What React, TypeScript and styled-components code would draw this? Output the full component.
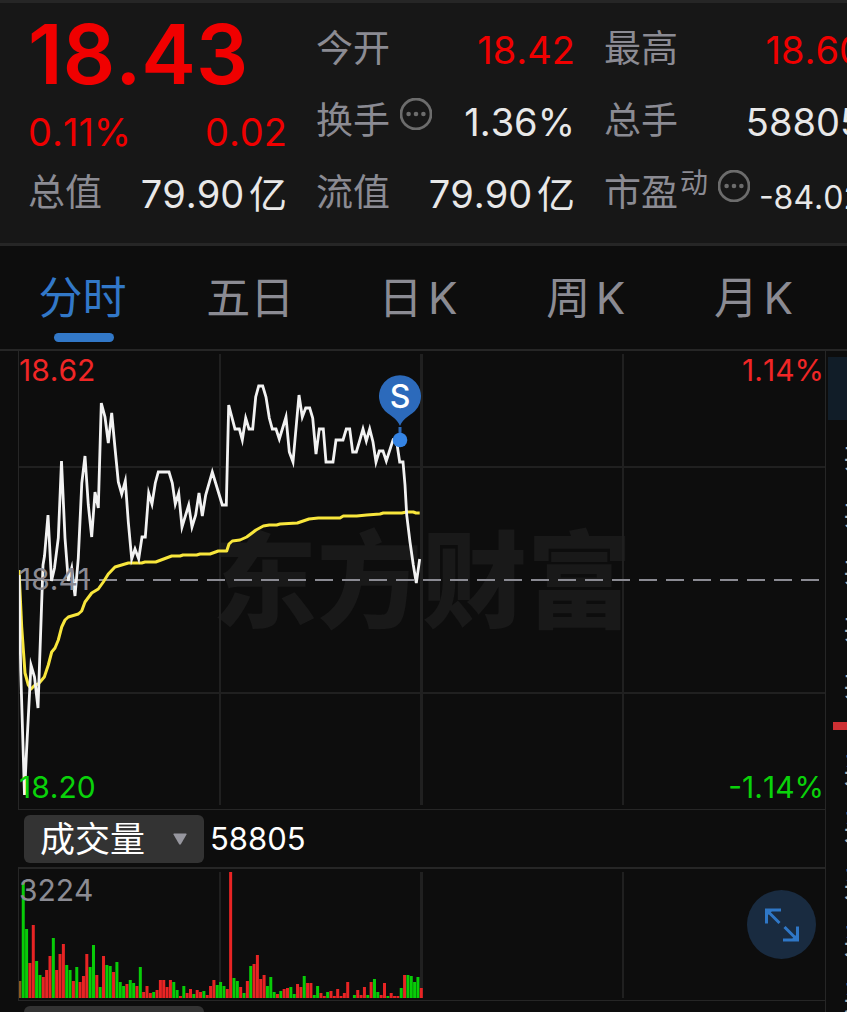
import React, { useState } from 'react';
import styled, { createGlobalStyle } from 'styled-components';

const color = {
  page: '#0d0d0d',
  panel: '#171717',
  line: '#262626',
  grid: '#202020',
  label: '#8b8b93',
  value: '#e8e8e8',
  up: '#f00000',
  chartUp: '#f02626',
  chartDown: '#0ad20a',
  accent: '#3278c8',
};

const GlobalStyle = createGlobalStyle`
  *, *::before, *::after { box-sizing: border-box; }
  body {
    margin: 0;
    background: ${color.page};
    font-family: Inter, 'Noto Sans CJK SC', sans-serif;
    font-weight: 380;
    font-kerning: none;
    text-autospace: normal;
  }
  button, select { font: inherit; font-kerning: inherit; text-autospace: inherit; margin: 0; }
  dl, dd, dt { margin: 0; }
`;

const Page = styled.main`
  height: 100vh;
  overflow: hidden;
  display: flex;
  flex-direction: column;
  color: ${color.value};
`;

/* ---------- quote summary ---------- */

const Summary = styled.header`
  flex: none;
  display: grid;
  grid-template-columns: repeat(3, 259px);
  gap: 29px;
  padding: 11px 0 13px 28px;
  overflow: hidden;
  background: ${color.panel};
  border-top: 3px solid ${color.line};
  border-bottom: 3px solid ${color.line};
`;

const SummaryColumn = styled.dl`
  display: flex;
  flex-direction: column;
`;

const Price = styled.div`
  height: 81px;
  line-height: 81px;
  font-size: 82px;
  font-weight: 600;
  color: ${color.up};
`;

const Change = styled.div`
  display: flex;
  justify-content: space-between;
  height: 63px;
  padding-top: 12px;
  line-height: 51px;
  font-size: 38px;
  color: ${color.up};
`;

const Stat = styled.div`
  display: flex;
  align-items: center;
  height: 72px;
  line-height: 72px;
  font-size: 38px;
  white-space: nowrap;
`;

const StatLabel = styled.dt`
  display: flex;
  align-items: flex-start;
  padding-bottom: 2px;
  font-size: 37px;
  color: ${color.label};
`;

const StatNote = styled.span`
  margin-left: 2px;
  font-size: 28px;
  line-height: 52px;
`;

const StatValue = styled.dd<{ $up?: boolean; $small?: boolean }>`
  margin-left: auto;
  color: ${(p) => (p.$up ? color.up : color.value)};
  ${(p) => p.$small && 'font-size: 32px; padding-top: 8px;'}
`;

const HintButton = styled.button`
  display: flex;
  padding: 0;
  margin: 13px 0 0 10px;
  border: 0;
  background: none;
  color: #6c6c6c;
  cursor: pointer;
`;

const Hint = ({ label }: { label: string }) => (
  <HintButton type="button" aria-label={label}>
    <svg width="32" height="32" viewBox="0 0 32 32" fill="none">
      <circle cx="16" cy="16" r="15" stroke="currentColor" strokeWidth="2.8" />
      <circle cx="8.6" cy="16" r="2.3" fill="currentColor" />
      <circle cx="16" cy="16" r="2.3" fill="currentColor" />
      <circle cx="23.4" cy="16" r="2.3" fill="currentColor" />
    </svg>
  </HintButton>
);

interface StatItem {
  label: string;
  value: string;
  note?: string;
  hint?: boolean;
  up?: boolean;
  small?: boolean;
}

const StatRow = ({ label, value, note, hint, up, small }: StatItem) => (
  <Stat>
    <StatLabel>
      {label}
      {note && <StatNote>{note}</StatNote>}
      {hint && <Hint label={`${label}说明`} />}
    </StatLabel>
    <StatValue $up={up} $small={small}>
      {value}
    </StatValue>
  </Stat>
);

const middleStats: StatItem[] = [
  { label: '今开', value: '18.42', up: true },
  { label: '换手', value: '1.36%', hint: true },
  { label: '流值', value: '79.90亿' },
];

const rightStats: StatItem[] = [
  { label: '最高', value: '18.60', up: true },
  { label: '总手', value: '58805' },
  { label: '市盈', value: '-84.02', note: '动', hint: true, small: true },
];

/* ---------- period tabs ---------- */

const Tabs = styled.nav`
  flex: none;
  display: grid;
  grid-template-columns: repeat(5, 1fr);
  padding-right: 8px;
  border-bottom: 2px solid ${color.line};
`;

const Tab = styled.button<{ $active: boolean }>`
  position: relative;
  height: 103px;
  padding: 0 3px 6px 0;
  border: 0;
  background: none;
  font-size: 44px;
  color: ${(p) => (p.$active ? color.accent : color.label)};
  cursor: pointer;

  &::after {
    content: '';
    display: ${(p) => (p.$active ? 'block' : 'none')};
    position: absolute;
    left: calc(50% - 30px);
    bottom: 7px;
    width: 60px;
    height: 9px;
    border-radius: 5px;
    background: ${color.accent};
  }
`;

/* ---------- charts ---------- */

const Body = styled.div`
  flex: 1;
  min-height: 0;
  display: grid;
  grid-template-columns: minmax(0, 1fr) 21px;
  padding-left: 18px;
  overflow: hidden;
`;

const Charts = styled.section`
  border-right: 1px solid ${color.line};
`;

const ChartPane = styled.div<{ $height: number; $ruled?: boolean }>`
  position: relative;
  height: ${(p) => p.$height}px;
  border-left: 1px solid ${color.line};
  border-bottom: 1px solid ${color.line};
  border-top: ${(p) => (p.$ruled ? `2px solid ${color.line}` : '0')};
`;

const Plot = styled.svg`
  position: absolute;
  inset: 0;
  width: 100%;
  height: 100%;
`;

const Watermark = styled.div`
  position: absolute;
  inset: 0;
  display: flex;
  align-items: center;
  justify-content: center;
  padding-bottom: 14px;
  font-family: 'Noto Sans CJK SC', sans-serif;
  font-size: 105px;
  font-weight: 900;
  line-height: 1;
  color: #191919;
`;

const AxisLabel = styled.span<{
  $at: 'top' | 'middle' | 'bottom';
  $right?: boolean;
  $color: string;
}>`
  position: absolute;
  ${(p) => (p.$right ? 'right: 1px;' : 'left: 0;')}
  ${(p) => p.$at === 'top' && 'top: 4px;'}
  ${(p) => p.$at === 'middle' && 'top: calc(50% - 16px);'}
  ${(p) => p.$at === 'bottom' && 'bottom: 7px;'}
  font-size: 30px;
  line-height: 30px;
  color: ${(p) => p.$color};
`;

const VolumeLabel = styled(AxisLabel)`
  line-height: 34px;
`;

const SellPin = styled.svg`
  position: absolute;
  top: 24px;
  left: calc(47.3% - 21px);
  width: 42px;
  height: 74px;
  font-family: Inter, sans-serif;
`;

const Indicator = styled.div`
  display: flex;
  align-items: center;
  gap: 6px;
  padding: 5px 0 4px 6px;
`;

const SelectBox = styled.div`
  position: relative;
  width: 180px;
  height: 48px;

  svg {
    position: absolute;
    right: 17px;
    top: 18px;
    pointer-events: none;
  }
`;

const Select = styled.select`
  appearance: none;
  width: 100%;
  height: 100%;
  padding: 0 0 0 16px;
  border: 0;
  border-radius: 6px;
  background: #333333;
  color: #ffffff;
  font-size: 35px;
  line-height: 48px;
`;

const IndicatorValue = styled.output`
  font-size: 31px;
  line-height: 48px;
  color: #ffffff;
`;

const ExpandButton = styled.button`
  position: absolute;
  top: 21px;
  right: 9px;
  display: flex;
  align-items: center;
  justify-content: center;
  width: 69px;
  height: 69px;
  padding: 0;
  border: 0;
  border-radius: 50%;
  background: #192b40;
  color: #2f77c6;
  cursor: pointer;
`;

/* ---------- order book, mostly beyond the right edge ---------- */

const OrderBook = styled.aside`
  overflow: hidden;
  padding: 6px 0 0 2px;
`;

const BookHead = styled.div`
  height: 63px;
  margin-bottom: 6px;
  background: #111d28;
`;

const BookRow = styled.div`
  height: 57px;
  padding-left: 15px;
  font-size: 34px;
  line-height: 57px;
  white-space: nowrap;
  color: #b4b4b4;
`;

const BookDivider = styled.div`
  height: 8px;
  margin: 11px 0 11px 5px;
  background: #cd3033;
`;

const pricePoints =
  '19,575 20.7,670 24.5,795 26.5,752 31,665 34.5,677 38,708 43,565 44.5,556 48,515 51.5,581 54.5,568 58.3,538 61.5,461 65,538 68.3,581 71.7,568 75,596 78.3,558 81.8,483 85,456 88.3,505 91.7,537 95,492 98.3,508 101.3,403 105,417 108.3,443 111.7,413 115,448 118.3,482 121.7,494 125.3,481 128.3,522 131.7,559 135,549 138.7,559 142,537 145.3,537 148.7,493 152,504 155.3,483 158.3,472 169,472 172.3,483 175.3,504 178.7,493 182,527 188.7,505 192,527 195.7,515 199,493 202.3,516 205.7,495 212.3,472 222.3,505 226.3,505 228.7,405 235,429 239.3,429 242.3,440 245.7,418 249,429 252.7,429 255.7,397 258.7,386 262.7,386 266,397 269.3,418 272.3,429 276,429 279.3,439 286,417 289.3,452 293,462 299,395 302.3,417 305.7,408 309.7,408 312.7,418 316,454 319.3,429 323.3,429 326,462 333,462 336,440 343,440 346.3,429 349.7,429 352.7,452 356.3,452 359.3,442 363,429 366.3,441 369.7,429 373,442 376,462 379.3,451 383,451 386.3,461 393,440 396.7,442 399.7,462 403,462 405,485 406.7,515 410,542 413.3,565 416.3,583 419.7,559';

const averagePoints =
  '19,570 21.7,627 25,673 28.3,685 31,689 35,685 38.3,684 44.3,677 48.3,665 51.7,652 55,648 58.3,640 61.7,627 65,620 68.3,617 78.3,614 81.7,611 85,602 91.7,593 98.3,589 103.3,582 108.3,574 115,567 128.3,563 141.7,563 145,562 155.7,562 171.7,556 180,556 183,555 196.7,555 200,554 210,554 218.3,551 226.7,551 229,544 232.3,541 240,540 246.7,537 256,530 263.3,526 269.3,525 276.7,525 280,524 297.3,523 309,519 318.3,518 340,518 343.3,516 356.7,516 366.7,515 380,514 383.3,513 401.7,513 406.7,512 413.3,512 416,513 419.7,513';

// One entry per minute: direction (r = up, g = down, o = opening) and height.
const volumes =
  'o17 g116 g69 r35 r73 g37 g23 r21 r28 r42 g60 r28 r44 r54 g33 g28 r17 g31 r16 r22 r44 g31 g53 r23 g11 r42 g33 g32 r26 g36 g16 g12 r14 g18 g15 r12 g31 r6 r12 r5 g6 r8 r18 r18 r11 r18 g16 g8 r2 g12 r5 r9 g4 r8 r6 g7 r3 r12 r18 g13 g16 g12 r9 r126 g20 g17 r11 g5 r17 g32 r34 r43 r19 r23 g12 g21 g6 r4 g7 r9 r10 g11 g4 r14 r11 g22 r15 r15 g3 g12 r5 r2 g6 r7 r2 r9 r2 r5 r16 r0 g3 r8 r3 r11 g3 r16 g19 g6 r3 r15 g2 r5 r2 r2 g10 r23 g23 g22 g16 g21 r10'.split(
    ' ',
  );

const barFill: Record<string, string> = { r: '#e82424', g: '#08cc08', o: '#8a5a20' };

const indicators = ['成交量', 'MACD', 'KDJ', 'RSI'];

const IndicatorSelect = ({ label, initial }: { label: string; initial: string }) => {
  const [value, setValue] = useState(initial);
  return (
    <SelectBox>
      <Select aria-label={label} value={value} onChange={(e) => setValue(e.target.value)}>
        {indicators.map((name) => (
          <option key={name}>{name}</option>
        ))}
      </Select>
      <svg width="14" height="12" viewBox="0 0 14 12">
        <path d="M1 .5h12q1 0 .5 1L8 11q-1 1.400-2 0L.5 1.500Q0 .5 1 .5z" fill="#97979f" />
      </svg>
    </SelectBox>
  );
};

const periods = ['分时', '五日', '日K', '周K', '月K'];

export default function App() {
  const [period, setPeriod] = useState('分时');

  return (
    <Page>
      <GlobalStyle />
      <Summary>
        <SummaryColumn as="div">
          <Price>18.43</Price>
          <Change>
            <span>0.11%</span>
            <span>0.02</span>
          </Change>
          <dl>
            <StatRow label="总值" value="79.90亿" />
          </dl>
        </SummaryColumn>
        <SummaryColumn>
          {middleStats.map((s) => (
            <StatRow key={s.label} {...s} />
          ))}
        </SummaryColumn>
        <SummaryColumn>
          {rightStats.map((s) => (
            <StatRow key={s.label} {...s} />
          ))}
        </SummaryColumn>
      </Summary>

      <Tabs>
        {periods.map((p) => (
          <Tab key={p} type="button" $active={p === period} onClick={() => setPeriod(p)}>
            {p}
          </Tab>
        ))}
      </Tabs>

      <Body>
        <Charts>
          <ChartPane $height={459}>
            <Watermark>东方财富</Watermark>
            <Plot viewBox="19 351 806 458" preserveAspectRatio="none" aria-hidden="true">
              <g fill={color.grid}>
                <rect x="219" y="354" width="2" height="451" />
                <rect x="420" y="354" width="3" height="451" />
                <rect x="622" y="354" width="2" height="451" />
                <rect x="19" y="466" width="806" height="2" />
                <rect x="19" y="692" width="806" height="2" />
              </g>
              <path d="M19 580H90" stroke={color.label} strokeWidth="2" />
              <path d="M99 580H819" stroke={color.label} strokeWidth="2" strokeDasharray="18 9" />
              <polyline points={averagePoints} fill="none" stroke="#f8e63c" strokeWidth="3" strokeLinejoin="round" />
              <polyline points={pricePoints} fill="none" stroke="#f2f2f2" strokeWidth="2.800" strokeMiterlimit="6" />
            </Plot>
            <AxisLabel $at="top" $color={color.chartUp}>18.62</AxisLabel>
            <AxisLabel $at="top" $right $color={color.chartUp}>1.14%</AxisLabel>
            <AxisLabel $at="middle" $color={color.label}>18.41</AxisLabel>
            <AxisLabel $at="bottom" $color={color.chartDown}>18.20</AxisLabel>
            <AxisLabel $at="bottom" $right $color={color.chartDown}>-1.14%</AxisLabel>
            <SellPin viewBox="0 0 42 74">
              <path d="M21 51C18 44 13 41.500 9 38.500A21 21 0 1 1 33 38.500C29 41.500 24 44 21 51z" fill="#2c6abb" />
              <rect x="19.500" y="52" width="3" height="8" fill="#2c6abb" />
              <circle cx="21" cy="65" r="7.300" fill="#3584e4" />
              <text x="21" y="33" textAnchor="middle" fontSize="32" fontWeight="500" fill="#ffffff">
                S
              </text>
            </SellPin>
          </ChartPane>

          <Indicator>
            <IndicatorSelect label="指标一" initial="成交量" />
            <IndicatorValue>58805</IndicatorValue>
          </Indicator>

          <ChartPane $height={134} $ruled>
            <Plot viewBox="19 869 806 131" preserveAspectRatio="none" aria-hidden="true">
              <g fill={color.grid}>
                <rect x="219" y="872" width="2" height="126" />
                <rect x="420" y="872" width="3" height="126" />
                <rect x="622" y="872" width="2" height="126" />
              </g>
              {volumes.map((v, i) => {
                const height = Number(v.slice(1));
                return (
                  <rect
                    key={i}
                    x={18.4 + i * 3.345}
                    y={998 - height}
                    width="3"
                    height={height}
                    fill={barFill[v[0]]}
                  />
                );
              })}
            </Plot>
            <VolumeLabel $at="top" $color={color.label}>3224</VolumeLabel>
            <ExpandButton type="button" aria-label="全屏">
              <svg width="34" height="34" viewBox="0 0 34 34" fill="none" stroke="currentColor" strokeWidth="3">
                <path d="M1.500 15.500V2H16M2 2.500L14.500 15" />
                <path d="M32.500 18.500V32H18M32 31.500L19.500 19" />
                <path d="M2 2H8L2 8zM32 32V26L26 32z" fill="currentColor" stroke="none" />
              </svg>
            </ExpandButton>
          </ChartPane>

          <Indicator>
            <IndicatorSelect label="指标二" initial="MACD" />
          </Indicator>
        </Charts>

        <OrderBook>
          <BookHead />
          {[5, 4, 3, 2, 1].map((n) => (
            <BookRow key={n}>卖{n}</BookRow>
          ))}
          <BookDivider />
          {[1, 2, 3, 4, 5].map((n) => (
            <BookRow key={n}>买{n}</BookRow>
          ))}
        </OrderBook>
      </Body>
    </Page>
  );
}
